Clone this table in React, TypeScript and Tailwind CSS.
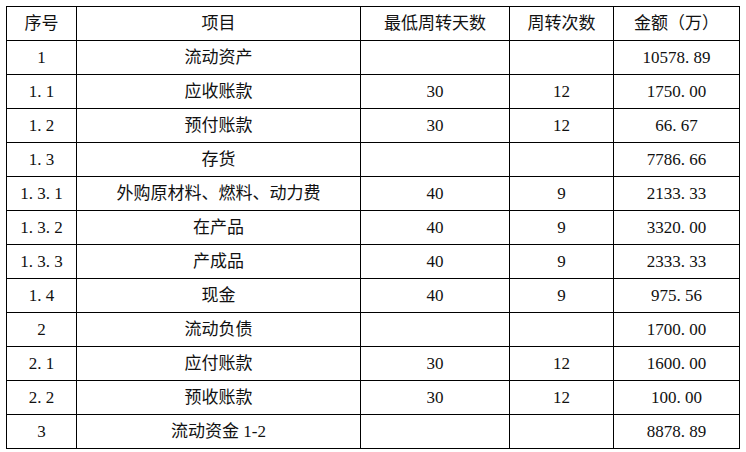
import React from 'react';

type Row = [string, string, string, string, string];

const header: Row = ['序号', '项目', '最低周转天数', '周转次数', '金额（万）'];

const rows: Row[] = [
  ['1', '流动资产', '', '', '10578.89'],
  ['1.1', '应收账款', '30', '12', '1750.00'],
  ['1.2', '预付账款', '30', '12', '66.67'],
  ['1.3', '存货', '', '', '7786.66'],
  ['1.3.1', '外购原材料、燃料、动力费', '40', '9', '2133.33'],
  ['1.3.2', '在产品', '40', '9', '3320.00'],
  ['1.3.3', '产成品', '40', '9', '2333.33'],
  ['1.4', '现金', '40', '9', '975.56'],
  ['2', '流动负债', '', '', '1700.00'],
  ['2.1', '应付账款', '30', '12', '1600.00'],
  ['2.2', '预收账款', '30', '12', '100.00'],
  ['3', '流动资金 1-2', '', '', '8878.89'],
];

const widths = ['w-[70px]', 'w-[284px]', 'w-[149px]', 'w-[104px]', 'w-[126px]'];

// SimSun-style numbers: the dot takes a full half-width cell
const Cell: React.FC<{ text: string }> = ({ text }) => {
  if (!text.includes('.')) return <>{text}</>;
  const parts = text.split('.');
  return (
    <>
      {parts.map((p, i) => (
        <React.Fragment key={i}>
          {i > 0 && <span className="inline-block w-[8.5px] text-left">.</span>}
          {p}
        </React.Fragment>
      ))}
    </>
  );
};

const App: React.FC = () => {
  return (
    <div className="min-h-screen bg-white pl-[6px] pt-[6px] font-[family-name:'Liberation_Serif','Noto_Sans_CJK_SC',serif] text-[17px] text-[#111]">
      <table className="border-collapse table-fixed w-[734px]">
        <colgroup>
          {widths.map((w, i) => (
            <col key={i} className={w} />
          ))}
        </colgroup>
        <tbody>
          {[header, ...rows].map((r, i) => (
            <tr key={i} className="h-[34px]">
              {r.map((c, j) => (
                <td
                  key={j}
                  className="border border-black text-center align-middle p-0 leading-none whitespace-nowrap"
                >
                  <Cell text={c} />
                </td>
              ))}
            </tr>
          ))}
        </tbody>
      </table>
    </div>
  );
};

export default App;
